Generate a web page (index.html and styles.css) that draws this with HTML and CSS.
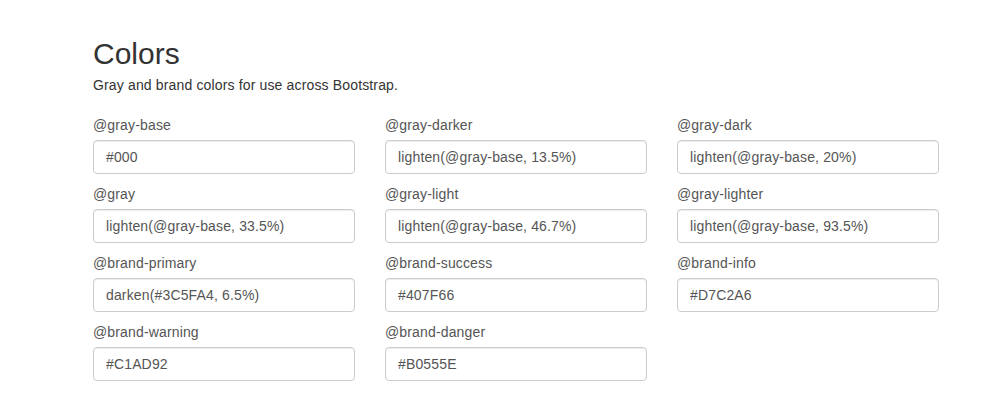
FILE: index.html
```html
<!DOCTYPE html>
<html>
<head>
<meta charset="utf-8">
<link rel="stylesheet" href="styles.css">
</head>
<body>
<div class="container">
  <h2 class="title">Colors</h2>
  <p class="lead">Gray and brand colors for use across Bootstrap.</p>
  <div class="grid">
    <div class="group"><label>@gray-base</label><input type="text" value="#000"></div>
    <div class="group"><label>@gray-darker</label><input type="text" value="lighten(@gray-base, 13.5%)"></div>
    <div class="group"><label>@gray-dark</label><input type="text" value="lighten(@gray-base, 20%)"></div>
    <div class="group"><label>@gray</label><input type="text" value="lighten(@gray-base, 33.5%)"></div>
    <div class="group"><label>@gray-light</label><input type="text" value="lighten(@gray-base, 46.7%)"></div>
    <div class="group"><label>@gray-lighter</label><input type="text" value="lighten(@gray-base, 93.5%)"></div>
    <div class="group"><label>@brand-primary</label><input type="text" value="darken(#3C5FA4, 6.5%)"></div>
    <div class="group"><label>@brand-success</label><input type="text" value="#407F66"></div>
    <div class="group"><label>@brand-info</label><input type="text" value="#D7C2A6"></div>
    <div class="group"><label>@brand-warning</label><input type="text" value="#C1AD92"></div>
    <div class="group"><label>@brand-danger</label><input type="text" value="#B0555E"></div>
  </div>
</div>
</body>
</html>
```
FILE: styles.css
```css
html, body {
  margin: 0;
  padding: 0;
  background: #fff;
}
body {
  font-family: "Liberation Sans", Arial, sans-serif;
  font-size: 14px;
  line-height: 20px;
  color: #333;
}
.container {
  padding: 37px 0 0 93px;
  width: 847px;
}
.title {
  margin: 0;
  font-size: 30px;
  font-weight: 500;
  line-height: 33px;
  color: #333;
}
.lead {
  margin: 5px 0 20px;
  font-size: 14px;
  line-height: 20px;
  color: #333;
  letter-spacing: 0.15px;
}
.grid {
  display: grid;
  grid-template-columns: repeat(3, 262px);
  column-gap: 30px;
}
.group {
  display: flex;
  flex-direction: column;
  margin-bottom: 10px;
}
.group label {
  display: block;
  line-height: 20px;
  margin-bottom: 5px;
  color: #555;
  font-size: 14px;
  letter-spacing: 0.15px;
}
.group input {
  box-sizing: border-box;
  width: 262px;
  height: 34px;
  margin: 0;
  padding: 6px 12px;
  border: 1px solid #ccc;
  border-radius: 4px;
  font-family: "Liberation Sans", Arial, sans-serif;
  font-size: 14px;
  line-height: 20px;
  letter-spacing: 0.15px;
  color: #555;
  background: #fff;
  box-shadow: inset 0 1px 1px rgba(0, 0, 0, 0.075);
  outline: none;
}
```
